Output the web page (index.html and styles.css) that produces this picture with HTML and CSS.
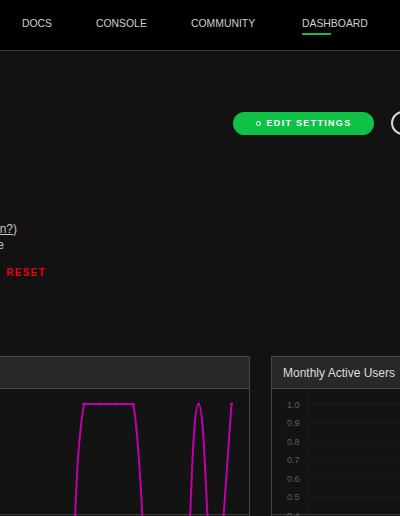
FILE: index.html
```html
<!DOCTYPE html>
<html lang="en">
<head>
<meta charset="utf-8">
<title>Dashboard</title>
<link rel="stylesheet" href="styles.css">
</head>
<body>
<nav class="topnav">
  <a class="nav-item nav-docs" href="#">DOCS</a>
  <a class="nav-item nav-console" href="#">CONSOLE</a>
  <a class="nav-item nav-community" href="#">COMMUNITY</a>
  <a class="nav-item active" href="#">DASHBOARD<span class="nav-bar"></span></a>
</nav>
<main class="main">
  <div class="actions">
    <button class="btn-edit"><span class="btn-icon"></span>EDIT SETTINGS</button>
    <span class="btn-circle"></span>
  </div>
  <div class="info">
    <div class="info-line line-plan">Current plan: Free <span class="paren">(<span class="link">upgrade plan?</span>)</span></div>
    <div class="info-line line-usage">Requests used this month: 0 of 1,000 free tier usage: free-tre</div>
    <div class="info-line line-key"><span class="key">API key: sk_live_4f9a••••••••27</span><span class="reset">RESET</span></div>
  </div>
  <div class="panels">
    <section class="panel panel-wide">
      <header class="panel-head">Requests</header>
      <div class="panel-body">
        <svg class="chart" width="348" height="128" viewBox="-99 389 348 128">
          <line x1="-99" y1="514.5" x2="249" y2="514.5" stroke="#3a3a3a"/>
          <g fill="none" stroke="#bf00a6" stroke-width="2">
            <path d="M75 520 C76.5 480 78 440 84 404 L133.3 404 C138 432 140 470 142.5 520"/>
            <path d="M190 520 C192 470 194 404 198.6 404 C203 404 205 470 207.7 520"/>
            <path d="M223.3 520 C226 480 229 440 231.5 404"/>
          </g>
          <g fill="#bf00a6">
            <circle cx="84" cy="404" r="1.6"/>
            <circle cx="100.4" cy="404" r="1.6"/>
            <circle cx="116.8" cy="404" r="1.6"/>
            <circle cx="133.2" cy="404" r="1.6"/>
            <circle cx="198.6" cy="404" r="1.6"/>
            <circle cx="231.5" cy="404" r="1.6"/>
          </g>
        </svg>
      </div>
    </section>
    <section class="panel panel-side">
      <header class="panel-head">Monthly Active Users</header>
      <div class="panel-body">
        <svg class="chart" width="200" height="128" viewBox="272 389 200 128">
          <g stroke="#1a1a1a" stroke-width="1">
            <line x1="306.5" y1="389" x2="306.5" y2="517"/>
            <line x1="306" y1="404.5" x2="472" y2="404.5"/>
            <line x1="306" y1="423" x2="472" y2="423"/>
            <line x1="306" y1="441.5" x2="472" y2="441.5"/>
            <line x1="306" y1="460" x2="472" y2="460"/>
            <line x1="306" y1="478.5" x2="472" y2="478.5"/>
            <line x1="306" y1="497" x2="472" y2="497"/>
          </g>
          <line x1="272" y1="514.5" x2="472" y2="514.5" stroke="#3a3a3a"/>
          <g class="axis-label" fill="#5e5e5e">
            <text x="287" y="407.5">1.0</text>
            <text x="287" y="426">0.9</text>
            <text x="287" y="444.5">0.8</text>
            <text x="287" y="463">0.7</text>
            <text x="287" y="481.5">0.6</text>
            <text x="287" y="500">0.5</text>
            <text x="287" y="518.5">0.4</text>
          </g>
        </svg>
      </div>
    </section>
  </div>
</main>
</body>
</html>
```
FILE: styles.css
```css
html, body {
  margin: 0;
  padding: 0;
}
body {
  width: 400px;
  height: 516px;
  overflow: hidden;
  background: #121212;
  font-family: "Liberation Sans", Arial, sans-serif;
  color: #cfcfcf;
}
.topnav {
  box-sizing: border-box;
  height: 51px;
  background: #000;
  border-bottom: 1px solid #3c3c3c;
  display: flex;
  align-items: flex-start;
  padding: 17px 0 0 22px;
}
.nav-item {
  flex: none;
  display: flex;
  flex-direction: column;
  font-size: 10.4px;
  line-height: 13px;
  color: #d0d0d0;
  text-decoration: none;
  white-space: nowrap;
}
.nav-docs {
  width: 74px;
}
.nav-console {
  width: 95px;
}
.nav-community {
  width: 111px;
}
.nav-bar {
  display: block;
  width: 29px;
  height: 2px;
  margin-top: 3px;
  background: #1db954;
}
.main {
  display: flex;
  flex-direction: column;
}
.actions {
  display: flex;
  align-items: center;
  gap: 17px;
  margin-top: 60px;
  padding-left: 233px;
  white-space: nowrap;
}
.btn-edit {
  flex: none;
  width: 141px;
  height: 23px;
  border: none;
  border-radius: 12px;
  background: #0fc146;
  color: #fff;
  font-family: "Liberation Sans", Arial, sans-serif;
  font-weight: bold;
  font-size: 9px;
  letter-spacing: 1.3px;
  display: flex;
  align-items: center;
  justify-content: center;
  gap: 6px;
  padding: 0;
}
.btn-icon {
  width: 3px;
  height: 3px;
  border: 1.5px solid #fff;
  border-radius: 50%;
  background: #0fc146;
}
.btn-circle {
  flex: none;
  width: 20px;
  height: 20px;
  border: 2px solid #d8d8d8;
  border-radius: 50%;
}
.info {
  margin-top: 86px;
  display: flex;
  flex-direction: column;
  white-space: nowrap;
  font-size: 12px;
  line-height: 16px;
  color: #c4c4c4;
}
.info-line {
  display: flex;
  justify-content: flex-end;
  align-items: center;
}
.line-plan {
  width: 17px;
}
.line-usage {
  width: 4px;
}
.line-key {
  width: 46px;
  margin-top: 10px;
  height: 20px;
  gap: 7px;
}
.link {
  color: #c4c4c4;
  text-decoration: underline;
  cursor: pointer;
}
.reset {
  color: #e8000b;
  font-weight: bold;
  font-size: 10px;
  letter-spacing: 1.3px;
}
.panels {
  margin-top: 73px;
  margin-left: -100px;
  display: flex;
  gap: 21px;
}
.panel {
  flex: none;
  border: 1px solid #474747;
  border-bottom: none;
  background: #131313;
}
.panel-wide {
  width: 348px;
}
.panel-side {
  width: 200px;
}
.panel-head {
  height: 32px;
  box-sizing: border-box;
  background: #282828;
  border-bottom: 1px solid #474747;
  font-size: 12px;
  line-height: 32px;
  padding-left: 11px;
  color: #dedede;
  white-space: nowrap;
}
.panel-body {
  height: 128px;
}
.chart {
  display: block;
}
.axis-label {
  font-family: "Liberation Sans", Arial, sans-serif;
  font-size: 9px;
}
```
